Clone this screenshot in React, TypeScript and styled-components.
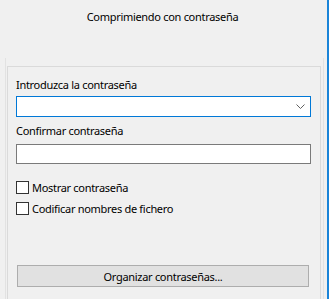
import React from "react";
import styled, { createGlobalStyle } from "styled-components";

const GlobalStyle = createGlobalStyle`
  html, body {
    margin: 0;
    padding: 0;
    background: #f0f0f0;
  }
  body {
    font-family: "Noto Sans", "Liberation Sans", sans-serif;
    font-size: 11px;
    letter-spacing: -0.3px;
    color: #000;
  }
`;

const Window = styled.div`
  box-sizing: border-box;
  width: 329px;
  height: 299px;
  overflow: hidden;
  background: #f0f0f0;
  border-right: 2px solid #1a84d8;
  display: flex;
  flex-direction: column;
`;

const Title = styled.div`
  height: 58px;
  padding-top: 9px;
  box-sizing: border-box;
  text-align: center;
  line-height: 16px;
  padding-right: 2px;
`;

const Frame = styled.div`
  flex: 1;
  margin-left: 5px;
  width: 319px;
  box-sizing: border-box;
  border-left: 1px solid #e2e2e2;
  border-right: 1px solid #e2e2e2;
  padding: 8px 2px 0 1px;
  display: flex;
`;

const Panel = styled.div`
  flex: 1;
  border: 1px solid #dadada;
  border-bottom: none;
  padding: 10px 9px 0 8px;
  display: flex;
  flex-direction: column;
`;

const Label = styled.div`
  line-height: 16px;
  margin-bottom: ${(p: { $gap?: number }) => p.$gap ?? 3}px;
`;

const Combo = styled.div`
  height: 21px;
  box-sizing: border-box;
  border: 1px solid #0078d7;
  background: #fff;
  display: flex;
  align-items: center;
  justify-content: flex-end;
  padding-right: 5px;
  margin-bottom: 6px;
`;

const TextField = styled.div`
  height: 20px;
  box-sizing: border-box;
  border: 1px solid #7a7a7a;
  background: #fff;
  margin-bottom: 17px;
`;

const CheckRow = styled.label`
  display: flex;
  align-items: center;
  height: 13px;
  gap: 3px;
  margin-bottom: 8px;
  line-height: 16px;
`;

const Box = styled.span`
  width: 13px;
  height: 13px;
  box-sizing: border-box;
  border: 1px solid #333;
  background: #fff;
  flex: none;
`;

const Spacer = styled.div`
  height: 42px;
`;

const Button = styled.div`
  margin: 0 2px 0 1px;
  height: 22px;
  box-sizing: border-box;
  border: 1px solid #adadad;
  background: #e1e1e1;
  display: flex;
  align-items: center;
  justify-content: center;
`;

const Chevron = () => (
  <svg width="9" height="5" viewBox="0 0 9 5">
    <path d="M0.5 0.5 L4.5 4.5 L8.5 0.5" fill="none" stroke="#606060" strokeWidth="1" />
  </svg>
);

export default function App() {
  return (
    <>
      <GlobalStyle />
      <Window>
        <Title>Comprimiendo con contraseña</Title>
        <Frame>
          <Panel>
            <Label>Introduzca la contraseña</Label>
            <Combo>
              <Chevron />
            </Combo>
            <Label $gap={5}>Confirmar contraseña</Label>
            <TextField />
            <CheckRow>
              <Box />
              Mostrar contraseña
            </CheckRow>
            <CheckRow>
              <Box />
              Codificar nombres de fichero
            </CheckRow>
            <Spacer />
            <Button>Organizar contraseñas...</Button>
          </Panel>
        </Frame>
      </Window>
    </>
  );
}
